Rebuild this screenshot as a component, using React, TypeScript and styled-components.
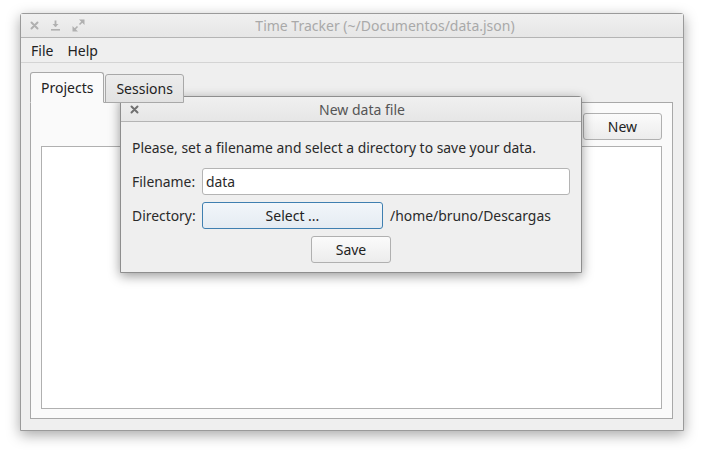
import React from "react";
import styled, { createGlobalStyle } from "styled-components";

const Global = createGlobalStyle`
  html, body { margin: 0; padding: 0; background: #ffffff; }
  body { font-family: "Noto Sans", "Open Sans", sans-serif; font-size: 14px; color: #2a2a2a; }
  * { box-sizing: border-box; }
`;

const Page = styled.div`
  width: 708px;
  height: 453px;
  padding: 13px 0 0 20px;
`;

const Window = styled.div`
  position: relative;
  width: 664px;
  height: 418px;
  background: #efefef;
  border: 1px solid #9a9a9a;
  border-radius: 3px 3px 0 0;
  box-shadow: 0 4px 14px rgba(0, 0, 0, 0.35);
  display: flex;
  flex-direction: column;
`;

const TitleBar = styled.div<{ $h: number }>`
  height: ${(p) => p.$h}px;
  display: flex;
  align-items: center;
  position: relative;
  background: linear-gradient(#f0f0f0, #e6e6e6);
  border-bottom: 1px solid #b4b4b4;
  flex: none;
`;

const TitleButtons = styled.div<{ $color: string }>`
  display: flex;
  align-items: center;
  gap: 11px;
  padding-left: 9px;
  color: ${(p) => p.$color};
`;

const TitleText = styled.div<{ $color: string; $shift: number }>`
  position: absolute;
  left: ${(p) => p.$shift}px;
  right: 0;
  text-align: center;
  color: ${(p) => p.$color};
  font-size: 14px;
  pointer-events: none;
`;

const MenuBar = styled.div`
  height: 25px;
  flex: none;
  display: flex;
  align-items: center;
  gap: 14px;
  padding-left: 10px;
  border-bottom: 1px solid #d4d4d4;
  color: #222;
`;

const Content = styled.div`
  flex: 1;
  display: flex;
  flex-direction: column;
  padding: 9px 10px 11px 9px;
`;

const TabRow = styled.div`
  display: flex;
  align-items: flex-end;
  height: 31px;
  flex: none;
  position: relative;
  z-index: 1;
  margin-bottom: -1px;
`;

const Tab = styled.div<{ $active?: boolean }>`
  height: ${(p) => (p.$active ? 31 : 29)}px;
  padding: 0 10px;
  display: flex;
  align-items: center;
  border: 1px solid #a8a8a8;
  border-bottom: ${(p) => (p.$active ? "1px solid #fafafa" : "1px solid #a8a8a8")};
  border-radius: 3px 3px 0 0;
  background: ${(p) => (p.$active ? "#fafafa" : "linear-gradient(#ececec, #e2e2e2)")};
  color: #222;
  margin-left: ${(p) => (p.$active ? 0 : 1)}px;
`;

const Pane = styled.div`
  flex: 1;
  background: #fafafa;
  border: 1px solid #a8a8a8;
  padding: 10px 10px 9px 10px;
  display: flex;
  flex-direction: column;
  gap: 6px;
`;

const PaneToolbar = styled.div`
  display: flex;
  justify-content: flex-end;
`;

const Button = styled.button<{ $w: number; $focus?: boolean }>`
  width: ${(p) => p.$w}px;
  height: 27px;
  font-family: inherit;
  font-size: 14px;
  color: #222;
  border-radius: 3px;
  border: 1px solid ${(p) => (p.$focus ? "#3f7fb0" : "#b0b0b0")};
  background: ${(p) =>
    p.$focus ? "linear-gradient(#f2f6fa, #e4ebf2)" : "linear-gradient(#fbfbfb, #ececec)"};
  padding: 0;
`;

const ListBox = styled.div`
  flex: 1;
  background: #ffffff;
  border: 1px solid #b0b0b0;
`;

const Dialog = styled.div`
  position: absolute;
  left: 99px;
  top: 82px;
  width: 462px;
  height: 177px;
  background: #efefef;
  border: 1px solid #8e8e8e;
  border-radius: 3px 3px 0 0;
  box-shadow: 0 3px 12px rgba(0, 0, 0, 0.4);
  display: flex;
  flex-direction: column;
`;

const DialogBody = styled.div`
  padding: 16px 11px 0 11px;
  display: flex;
  flex-direction: column;
  font-size: 13.9px;
`;

const Message = styled.div`
  height: 20px;
  line-height: 20px;
  margin-bottom: 10px;
`;

const FormRow = styled.div`
  display: flex;
  align-items: center;
  gap: 7px;
  margin-bottom: 7px;
`;

const Label = styled.span`
  width: 63px;
  white-space: nowrap;
`;

const TextInput = styled.div`
  width: 368px;
  height: 27px;
  background: #fff;
  border: 1px solid #b4b4b4;
  border-radius: 3px;
  padding-left: 3px;
  display: flex;
  align-items: center;
`;

const Centered = styled.div`
  display: flex;
  justify-content: center;
`;

const CloseIcon = () => (
  <svg width="9" height="9" viewBox="0 0 9 9">
    <path d="M1.5 1.5 L7.5 7.5 M7.5 1.5 L1.5 7.5" stroke="currentColor" strokeWidth="2" strokeLinecap="round" />
  </svg>
);

const MinIcon = () => (
  <svg width="11" height="11" viewBox="0 0 11 11">
    <path d="M5.5 0.5 V6.5" stroke="currentColor" strokeWidth="1.8" />
    <path d="M2.5 4 L5.5 7 L8.5 4 Z" fill="currentColor" />
    <path d="M1 9.8 H10" stroke="currentColor" strokeWidth="1.6" />
  </svg>
);

const MaxIcon = () => (
  <svg width="13" height="13" viewBox="0 0 13 13">
    <path d="M7 0.5 H12.5 V6 Z" fill="currentColor" />
    <path d="M10.5 2.5 L7.5 5.5" stroke="currentColor" strokeWidth="1.6" />
    <path d="M0.5 7 V12.5 H6 Z" fill="currentColor" />
    <path d="M2.5 10.5 L5.5 7.5" stroke="currentColor" strokeWidth="1.6" />
  </svg>
);

export default function App() {
  return (
    <>
      <Global />
      <Page>
        <Window>
          <TitleBar $h={24}>
            <TitleButtons $color="#b0b0b0">
              <CloseIcon />
              <MinIcon />
              <MaxIcon />
            </TitleButtons>
            <TitleText $color="#a9a9a9" $shift={66}>
              Time Tracker (~/Documentos/data.json)
            </TitleText>
          </TitleBar>
          <MenuBar>
            <span>File</span>
            <span>Help</span>
          </MenuBar>
          <Content>
            <TabRow>
              <Tab $active>Projects</Tab>
              <Tab>Sessions</Tab>
            </TabRow>
            <Pane>
              <PaneToolbar>
                <Button $w={79}>New</Button>
              </PaneToolbar>
              <ListBox />
            </Pane>
          </Content>
          <Dialog>
            <TitleBar $h={25}>
              <TitleButtons $color="#707070">
                <CloseIcon />
              </TitleButtons>
              <TitleText $color="#555" $shift={22}>
                New data file
              </TitleText>
            </TitleBar>
            <DialogBody>
              <Message>Please, set a filename and select a directory to save your data.</Message>
              <FormRow>
                <Label>Filename:</Label>
                <TextInput>data</TextInput>
              </FormRow>
              <FormRow>
                <Label>Directory:</Label>
                <Button $w={181} $focus>
                  Select ...
                </Button>
                <span>/home/bruno/Descargas</span>
              </FormRow>
              <Centered>
                <Button $w={80}>Save</Button>
              </Centered>
            </DialogBody>
          </Dialog>
        </Window>
      </Page>
    </>
  );
}
